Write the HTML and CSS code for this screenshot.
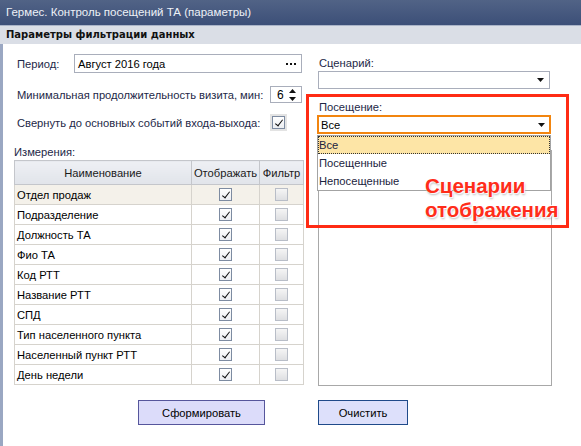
FILE: index.html
```html
<!DOCTYPE html>
<html lang="ru">
<head>
<meta charset="utf-8">
<title>Гермес. Контроль посещений ТА (параметры)</title>
<link rel="stylesheet" href="styles.css">
</head>
<body>
<div class="window">
  <header class="titlebar">Гермес. Контроль посещений ТА (параметры)</header>
  <div class="sectionbar">Параметры фильтрации данных</div>
  <main class="content">
    <section class="left">
      <div class="row row-period">
        <span class="lbl">Период:</span>
        <div class="field period">
          <span>Август 2016 года</span>
          <svg class="dots" width="10" height="2" viewBox="0 0 10 2"><rect x="0" y="0" width="2" height="2"/><rect x="4" y="0" width="2" height="2"/><rect x="8" y="0" width="2" height="2"/></svg>
        </div>
      </div>
      <div class="row row-min">
        <span class="lbl">Минимальная продолжительность визита, мин:</span>
        <div class="field spin">
          <span>6</span>
          <svg class="arrows" width="7" height="12" viewBox="0 0 7 12"><path d="M3.5 0L7 4H0z M0 8h7L3.5 12z"/></svg>
        </div>
      </div>
      <div class="row row-collapse">
        <span class="lbl">Свернуть до основных событий входа-выхода:</span>
        <span class="chkwrap"><span class="chk on"></span></span>
      </div>
      <div class="dimlabel">Измерения:</div>
      <table class="grid">
        <thead>
          <tr><th class="c-name">Наименование</th><th class="c-show">Отображать</th><th class="c-filter">Фильтр</th></tr>
        </thead>
        <tbody>
          <tr class="current"><td>Отдел продаж</td><td><span class="chk on"></span></td><td><span class="chk"></span></td></tr>
          <tr><td>Подразделение</td><td><span class="chk on"></span></td><td><span class="chk"></span></td></tr>
          <tr><td>Должность ТА</td><td><span class="chk on"></span></td><td><span class="chk"></span></td></tr>
          <tr><td>Фио ТА</td><td><span class="chk on"></span></td><td><span class="chk"></span></td></tr>
          <tr><td>Код РТТ</td><td><span class="chk on"></span></td><td><span class="chk"></span></td></tr>
          <tr><td>Название РТТ</td><td><span class="chk on"></span></td><td><span class="chk"></span></td></tr>
          <tr><td>СПД</td><td><span class="chk on"></span></td><td><span class="chk"></span></td></tr>
          <tr><td>Тип населенного пункта</td><td><span class="chk on"></span></td><td><span class="chk"></span></td></tr>
          <tr><td>Населенный пункт РТТ</td><td><span class="chk on"></span></td><td><span class="chk"></span></td></tr>
          <tr><td>День недели</td><td><span class="chk on"></span></td><td><span class="chk"></span></td></tr>
        </tbody>
      </table>
      <button class="btn btn-run" type="button">Сформировать</button>
    </section>
    <section class="right">
      <div class="rlbl">Сценарий:</div>
      <div class="combo">
        <span></span>
        <svg class="caret" width="7" height="4" viewBox="0 0 7 4"><path d="M0 0h7L3.5 4z"/></svg>
      </div>
      <div class="rlbl visit-lbl">Посещение:</div>
      <div class="combo-wrap">
        <div class="combo focused">
          <span>Все</span>
          <svg class="caret" width="7" height="4" viewBox="0 0 7 4"><path d="M0 0h7L3.5 4z"/></svg>
        </div>
        <ul class="droplist">
          <li class="sel">Все</li>
          <li>Посещенные</li>
          <li>Непосещенные</li>
        </ul>
      </div>
      <div class="panel"></div>
      <button class="btn btn-clear" type="button">Очистить</button>
    </section>
    <div class="callout"><span class="callout-text">Сценарии<br>отображения</span></div>
  </main>
</div>
</body>
</html>
```
FILE: styles.css
```css
* { box-sizing: border-box; }
html, body { margin: 0; padding: 0; }
body {
  width: 581px;
  height: 446px;
  overflow: hidden;
  background: #ffffff;
  font-family: "Liberation Sans", Arial, sans-serif;
  font-size: 11.2px;
  color: #1d2847;
}
.window {
  width: 581px;
  height: 446px;
  display: flex;
  flex-direction: column;
}
.titlebar {
  flex: none;
  height: 26px;
  background: linear-gradient(#516386, #3c4f78);
  border-bottom: 1px solid #aab4c8;
  color: #eef1f7;
  font-size: 11.5px;
  line-height: 25px;
  padding-left: 6px;
  white-space: nowrap;
}
.sectionbar {
  flex: none;
  height: 18px;
  background: #dadee6;
  font-family: "DejaVu Sans", sans-serif;
  font-weight: bold;
  font-size: 10px;
  line-height: 18px;
  padding-left: 6px;
  color: #111111;
  white-space: nowrap;
}
.content {
  flex: 1;
  position: relative;
  display: flex;
  gap: 15px;
  border-left: 3px solid #9aa7c2;
  padding-left: 11px;
}
.left {
  width: 289px;
  flex: none;
  display: flex;
  flex-direction: column;
}
.row {
  display: flex;
  align-items: center;
  padding-left: 3px;
}
.lbl { white-space: nowrap; }
.row-period { margin-top: 10px; height: 19px; }
.row-min { margin-top: 13px; height: 17px; }
.row-collapse { margin-top: 11px; height: 17px; }
.field {
  flex: none;
  border: 1px solid #a9aebb;
  background: #fff;
  display: flex;
  align-items: center;
  color: #000;
}
.period {
  margin-left: auto;
  margin-right: 1px;
  width: 228px;
  height: 19px;
  padding: 0 5px 0 3px;
  justify-content: space-between;
}
.dots { fill: #111; }
.spin {
  margin-left: auto;
  margin-right: 1px;
  width: 32px;
  height: 17px;
  padding: 0 5px 0 6px;
  justify-content: space-between;
  font-size: 12px;
}
.arrows { fill: #111; }
.chkwrap {
  flex: none;
  margin-left: auto;
  margin-right: 16px;
  width: 17px;
  height: 17px;
  background: #e3e3e3;
  display: flex;
  align-items: center;
  justify-content: center;
}
.chk {
  display: inline-block;
  position: relative;
  width: 13px;
  height: 13px;
  border: 1px solid #b8bdc7;
  background: linear-gradient(#f5f5f5, #dedfe2);
  vertical-align: middle;
}
.chk.on {
  border-color: #7d8ba1;
  background: linear-gradient(#ffffff, #eceef2);
}
.chk.on::after {
  content: "";
  position: absolute;
  left: 3.5px;
  top: 0.5px;
  width: 3px;
  height: 7px;
  border-right: 1.5px solid #111;
  border-bottom: 1.5px solid #111;
  transform: rotate(38deg);
}
.dimlabel {
  margin-top: 14px;
  line-height: 14px;
  height: 14px;
}
.grid {
  margin-top: 1px;
  width: 289px;
  border-collapse: collapse;
  border: 1px solid #a6a6a6;
  color: #000;
  table-layout: fixed;
}
.grid th {
  height: 24px;
  padding: 0;
  font-weight: normal;
  color: #1a1a1a;
  background: linear-gradient(#eef0f4, #e1e4ea);
  border: 1px solid #c4c6cb;
  text-align: center;
  white-space: nowrap;
  overflow: hidden;
}
.grid .c-name { width: 177px; }
.grid .c-show { width: 68px; }
.grid .c-filter { width: 44px; }
.grid td {
  height: 20px;
  padding: 0;
  border: 1px solid #d6d3cd;
  text-align: center;
  white-space: nowrap;
}
.grid td:first-child {
  text-align: left;
  padding-left: 2px;
}
.grid tr.current td { background: #f4f1ea; }
.btn {
  font-family: "Liberation Sans", Arial, sans-serif;
  font-size: 11.2px;
  color: #000;
  height: 25px;
  padding: 0;
  cursor: pointer;
}
.btn-run {
  margin-top: 15px;
  margin-left: 124px;
  width: 127px;
  background: #dcdcfa;
  border: 1px solid #56569c;
}
.right {
  width: 234px;
  flex: none;
  display: flex;
  flex-direction: column;
  padding-bottom: 21px;
}
.rlbl {
  margin-top: 12px;
  line-height: 14px;
  height: 14px;
  padding-left: 1px;
}
.combo {
  margin-top: 1px;
  width: 232px;
  height: 18px;
  border: 1px solid #a9aebb;
  background: #fff;
  display: flex;
  align-items: center;
  justify-content: space-between;
  padding: 0 5px 0 3px;
  color: #000;
}
.caret { fill: #111; }
.visit-lbl { margin-top: 11px; }
.combo-wrap {
  position: relative;
  margin-top: 1px;
  margin-left: -1px;
}
.combo.focused {
  margin-top: 0;
  width: 234px;
  height: 19px;
  border: 2px solid #f2850f;
  padding: 0 4px 0 2px;
}
.droplist {
  position: absolute;
  left: 0;
  top: 20px;
  width: 234px;
  margin: 0;
  padding: 0;
  list-style: none;
  background: #fff;
  border: 1px solid #a3a3a3;
  color: #1b2440;
  z-index: 2;
}
.droplist li {
  height: 18px;
  line-height: 18px;
  padding-left: 1px;
}
.droplist li.sel {
  background: #fde5a6;
  outline: 1px dotted #333;
  outline-offset: -1px;
}
.panel {
  flex: 1;
  margin-top: 16px;
  border: 1px solid #a8a8a8;
}
.btn-clear {
  margin-top: 14px;
  width: 90px;
  background: #dde0fb;
  border: 1px solid #1f4a8a;
}
.callout {
  position: absolute;
  left: 303px;
  top: 50px;
  width: 263px;
  height: 134px;
  border: 3px solid #ff2b14;
  z-index: 3;
  pointer-events: none;
}
.callout-text {
  position: absolute;
  left: 116px;
  top: 77px;
  font-family: "Liberation Sans", Arial, sans-serif;
  font-weight: bold;
  font-size: 20.5px;
  line-height: 24px;
  color: #ff2d1a;
  text-shadow: 1px 1px 1px #ffffff, -1px -1px 1px #ffffff, 1px 2px 2px rgba(120,120,120,0.5);
  white-space: nowrap;
}
```
